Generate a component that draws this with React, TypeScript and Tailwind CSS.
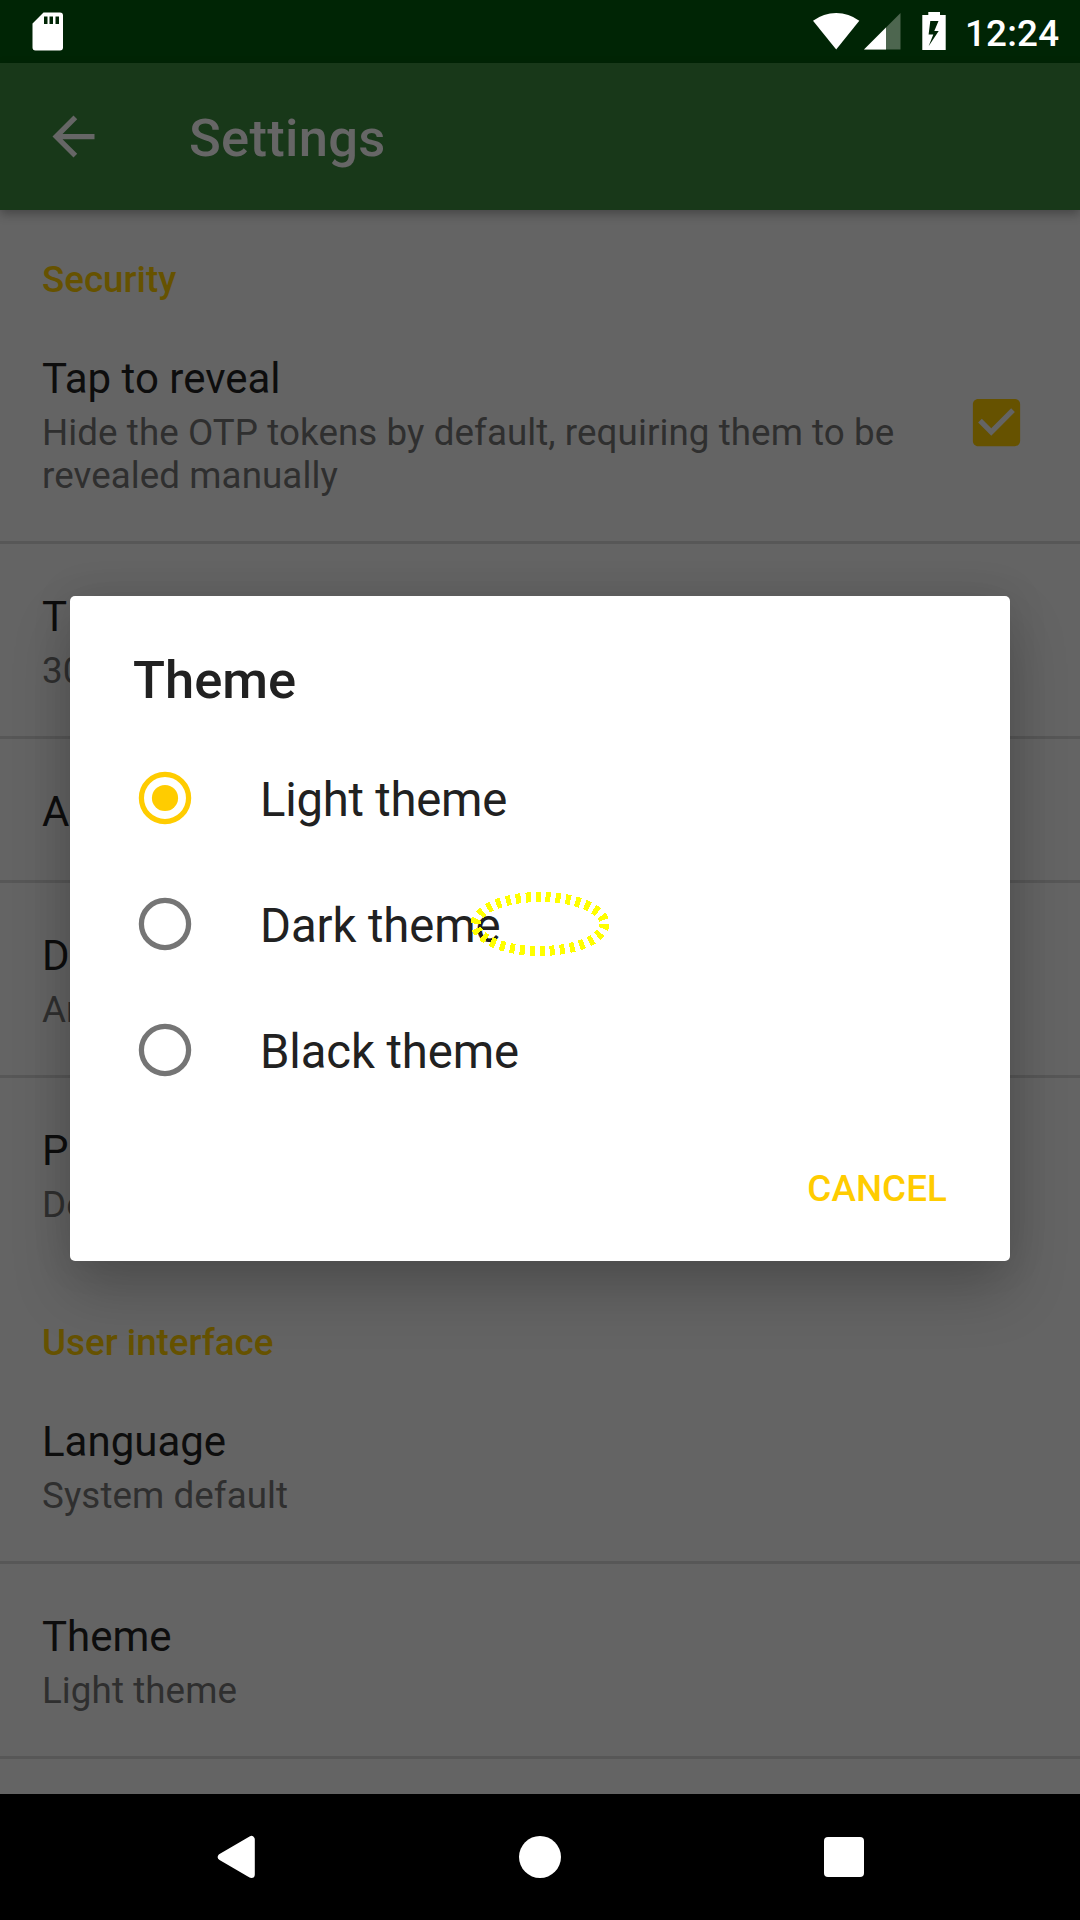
import React from "react";

type PreferenceProps = {
  title: string;
  summary?: string;
  checked?: boolean;
  last?: boolean;
};

function Preference({ title, summary, checked, last }: PreferenceProps) {
  return (
    <div
      className={
        last
          ? "flex items-center border-b-[3px] border-transparent pl-[42px]"
          : "flex items-center border-b-[3px] border-[#575757] pl-[42px]"
      }
    >
      <div className="w-[882px] pt-12 pb-11">
        <div className="text-[42px] leading-[49px] text-[#0d0d0d]">{title}</div>
        {summary && (
          <div className="mt-2 text-[36.75px] leading-[43px] tracking-[0.07px] text-[#2f2f2f]">
            {summary}
          </div>
        )}
      </div>
      {checked && (
        <svg viewBox="0 0 24 24" className="-mt-0.5 ml-[40.5px] size-[63px]">
          <path
            fill="#665200"
            d="M19 3H5c-1.11 0-2 .9-2 2v14c0 1.1.89 2 2 2h14c1.11 0 2-.9 2-2V5c0-1.1-.89-2-2-2zm-9 14l-5-5 1.41-1.41L10 14.17l7.59-7.59L19 8l-9 9z"
          />
        </svg>
      )}
    </div>
  );
}

function SectionHeader({ children }: { children: string }) {
  return (
    <div className="pt-12 pb-[5px] pl-[42px] text-[36.75px] leading-[43px] font-medium text-[#665200]">
      {children}
    </div>
  );
}

function StatusBar() {
  return (
    <div className="flex h-[63px] shrink-0 items-start bg-[#002505] text-white">
      <svg viewBox="0 0 31 39" className="mt-3 ml-8 h-[39px] w-[31px]">
        <path
          fill="currentColor"
          fillRule="evenodd"
          d="M11.5.5H28a3 3 0 0 1 3 3V35.500a3 3 0 0 1-3 3H3.500a3 3 0 0 1-3-3V11.500zM12 4.500V12h3.500V4.500zM17.500 4.500V12H21V4.500zM23.500 4.500V12H27V4.500z"
        />
      </svg>
      <svg viewBox="0 0 47 37" className="mt-[13px] ml-[750px] h-[37px] w-[47px]">
        <path fill="currentColor" d="M0 7.800Q10.500 0 23.200 0T46.300 7.800L23.200 36.500z" />
      </svg>
      <svg viewBox="0 0 37 37" className="mt-[13px] ml-1 h-[37px] w-[37px]">
        <path fill="#4d664f" d="M36.500 0V36.500H0z" />
        <path fill="currentColor" d="M22 14.500V36.500H0z" />
      </svg>
      <svg viewBox="0 0 24 38" className="mt-3 ml-[21px] h-[38px] w-6">
        <path
          fill="currentColor"
          fillRule="evenodd"
          d="M6.300 0H18V3H23.700V38H.3V3H6.300zM8.300 9L6.600 22.500H11.300L6.600 34.200L16.700 19H12.300L16.500 9z"
        />
      </svg>
      <div className="mt-3 ml-[19px] text-[36.75px] leading-[43px] font-medium tracking-[0.2px]">12:24</div>
    </div>
  );
}

function AppBar() {
  return (
    <div className="relative flex h-[147px] shrink-0 items-start bg-[#183819] text-[#666666] shadow-[0_4px_10px_rgba(0,0,0,0.3)]">
      <svg viewBox="0 0 24 24" className="mt-[42px] ml-[42px] size-[63px]">
        <path fill="currentColor" d="M20 11H7.830l5.590-5.590L12 4l-8 8 8 8 1.410-1.410L7.830 13H20v-2z" />
      </svg>
      <div className="mt-11 ml-[84px] text-[52.5px] leading-[62px] font-medium tracking-[0.3px]">Settings</div>
    </div>
  );
}

function ThemeOption({ label, selected }: { label: string; selected?: boolean }) {
  return (
    <div className="flex h-[126px] items-center pl-[68px]">
      <svg viewBox="0 0 54 54" className="size-[54px]">
        <circle
          cx="27"
          cy="27"
          r="23.600"
          fill="none"
          strokeWidth="5.250"
          stroke={selected ? "#ffcc00" : "#757575"}
        />
        {selected && <circle cx="27" cy="27" r="13.100" fill="#ffcc00" />}
      </svg>
      <div
        className={
          selected
            ? "ml-[68px] pt-[5px] text-[47.25px] leading-[55px] tracking-[-0.24px] text-[#212121]"
            : "ml-[68px] pt-[5px] text-[47.25px] leading-[55px] tracking-[-0.1px] text-[#212121]"
        }
      >
        {label}
      </div>
    </div>
  );
}

function ThemeDialog() {
  return (
    <div className="absolute top-[596px] left-[70px] h-[665px] w-[940px] rounded-[5px] bg-white shadow-[0_30px_60px_rgba(0,0,0,0.2),0_0_40px_rgba(0,0,0,0.1)]">
      <div className="pt-[53px] pl-[63px] text-[52.5px] leading-[62px] font-medium text-[#212121]">
        Theme
      </div>
      <div className="pt-6">
        <ThemeOption label="Light theme" selected />
        <ThemeOption label="Dark theme" />
        <ThemeOption label="Black theme" />
      </div>
      <div className="flex justify-end pt-[54px] pr-[63px] text-[36.75px] leading-[43px] font-medium tracking-[0.1px] text-[#ffcc00]">
        CANCEL
      </div>
      <svg
        viewBox="0 0 140 66"
        className="absolute top-[295px] left-[400px] h-[66px] w-[140px]"
        shapeRendering="crispEdges"
      >
        <ellipse
          cx="70"
          cy="33"
          rx="64.500"
          ry="27"
          fill="none"
          stroke="#ffff00"
          strokeWidth="10"
          strokeDasharray="5 5"
        />
      </svg>
    </div>
  );
}

function NavigationBar() {
  return (
    <div className="relative flex h-[126px] shrink-0 items-center bg-black">
      <svg viewBox="0 0 38 44" className="ml-[217px] h-11 w-[38px]">
        <path
          fill="white"
          stroke="white"
          strokeWidth="7"
          strokeLinejoin="round"
          d="M34.300 4.500V39.500L4.300 22z"
        />
      </svg>
      <div className="ml-[264px] size-[42px] rounded-full bg-white" />
      <div className="ml-[263px] size-10 rounded-[4px] bg-white" />
    </div>
  );
}

export default function App() {
  return (
    <div className="relative flex h-[1920px] w-[1080px] flex-col overflow-hidden bg-[#646464] font-['Roboto',sans-serif]">
      <StatusBar />
      <AppBar />
      <div className="min-h-0 flex-1 overflow-hidden">
        <SectionHeader>Security</SectionHeader>
        <Preference
          title="Tap to reveal"
          summary="Hide the OTP tokens by default, requiring them to be revealed manually"
          checked
        />
        <Preference title="T" summary="30" />
        <Preference title="A" />
        <Preference title="D" summary="An" />
        <Preference title="P" summary="De" last />
        <SectionHeader>User interface</SectionHeader>
        <Preference title="Language" summary="System default" />
        <Preference title="Theme" summary="Light theme" />
      </div>
      <NavigationBar />
      <ThemeDialog />
    </div>
  );
}
